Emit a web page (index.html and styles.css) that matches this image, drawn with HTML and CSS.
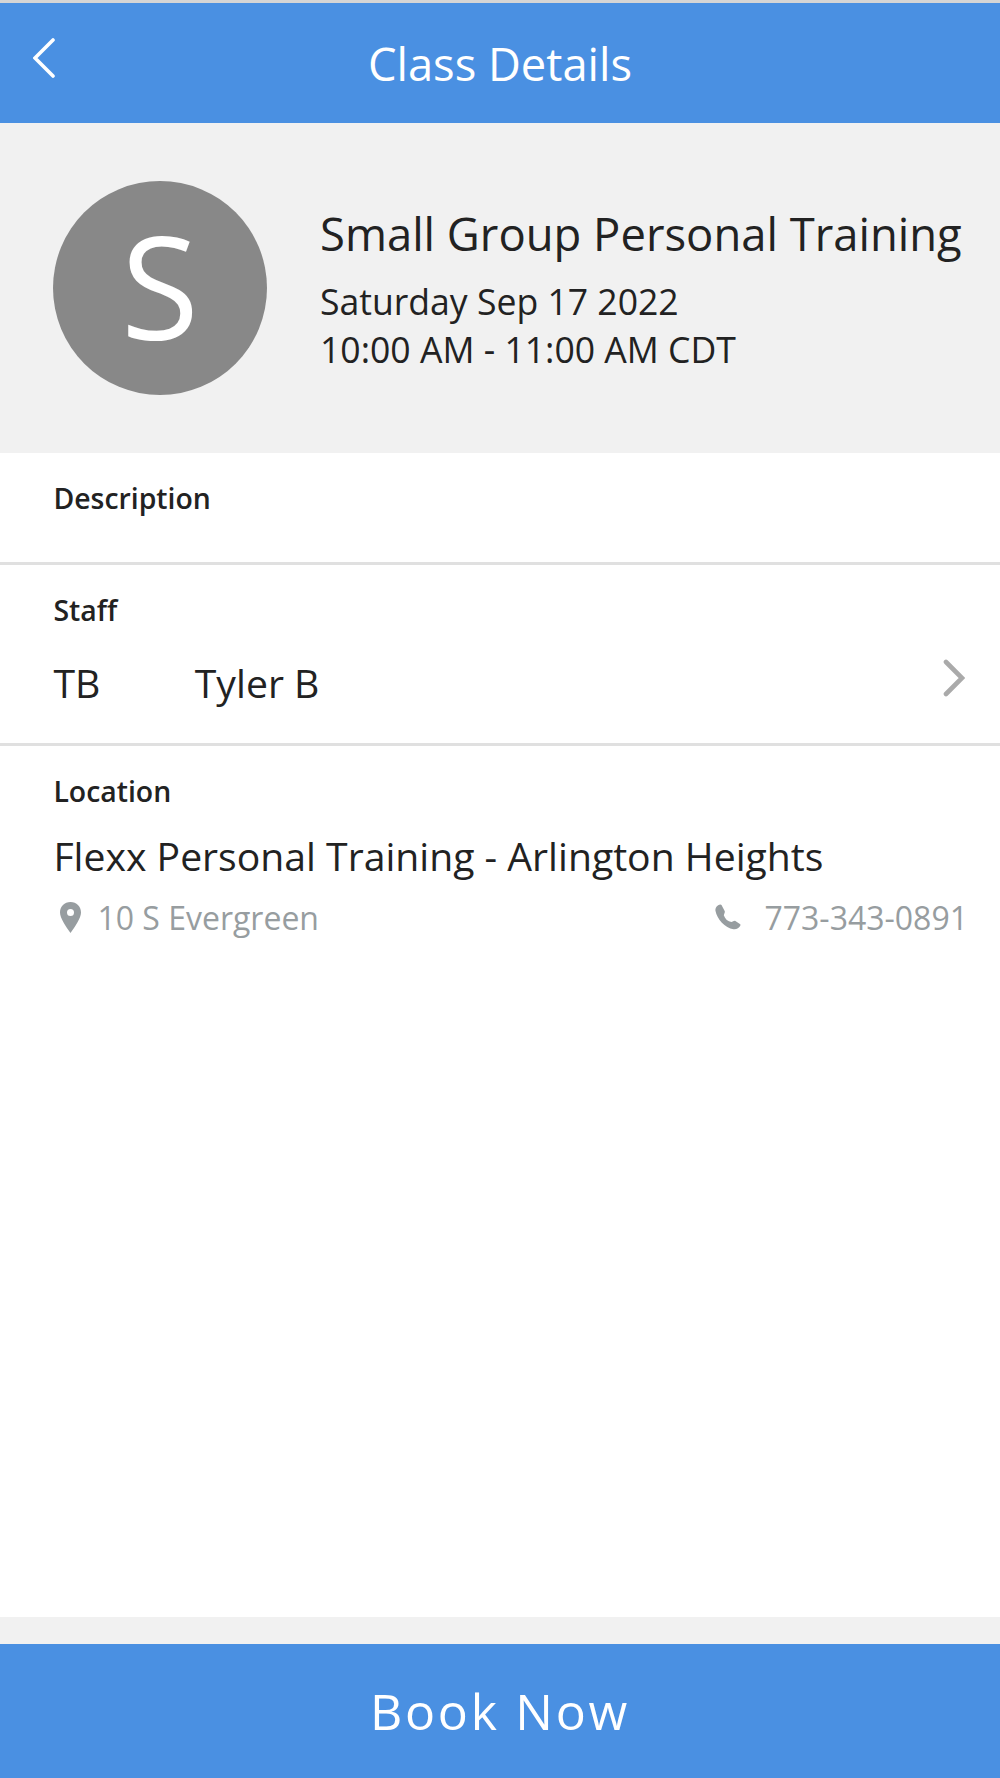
FILE: index.html
```html
<!DOCTYPE html>
<html lang="en">
<head>
  <meta charset="UTF-8"/>
  <meta name="viewport" content="width=device-width, initial-scale=1.0"/>
  <title>Class Details</title>
  <link rel="stylesheet" href="styles.css">
</head>
<body>
  <header class="top-bar">
    <svg class="back-icon" viewBox="0 0 22 40"><path d="M20 2 L2 20 L20 38"/></svg>
    <h1>Class Details</h1>
  </header>

  <section class="summary">
    <div class="avatar">S</div>
    <div class="summary-text">
      <h2>Small Group Personal Training</h2>
      <p>Saturday Sep 17 2022</p>
      <p class="time">10:00 AM - 11:00 AM CDT</p>
    </div>
  </section>

  <main>
    <section class="description">
      <h3>Description</h3>
    </section>

    <section class="staff">
      <h3>Staff</h3>
      <div class="staff-row">
        <span class="initials">TB</span>
        <span class="name">Tyler B</span>
        <svg class="next-icon" viewBox="0 0 22 38"><path d="M3 3 L19 19 L3 35"/></svg>
      </div>
    </section>

    <section class="location">
      <h3>Location</h3>
      <p class="place">Flexx Personal Training - Arlington Heights</p>
      <div class="contact">
        <svg class="pin-icon" viewBox="0 0 21 31"><path fill-rule="evenodd" d="M10.500 0C4.500 0 0 4.500 0 10.500C0 16 6 25 10.500 31C15 25 21 16 21 10.500C21 4.500 16.500 0 10.500 0ZM10.500 7a3.500 3.500 0 1 1 0 7a3.500 3.500 0 0 1 0-7Z"/></svg>
        <span class="address">10 S Evergreen</span>
        <svg class="phone-icon" viewBox="0 0 26 26"><path d="M5.500 0.500C2 1 0 4 0.500 7C2 15 10 24 18.500 25.200C21.500 25.600 24 24 25.500 21.200L25.300 20.200L20 16.800L18.800 16.900L16.500 18C13 17.500 10 15 8.800 11.200L9.800 8.300L9.800 7.300L6.500 0.900Z"/></svg>
        <span class="phone">773-343-0891</span>
      </div>
    </section>
  </main>

  <footer>
    <button type="button" class="book-btn">Book Now</button>
  </footer>
</body>
</html>
```
FILE: styles.css
```css
* { box-sizing:border-box; }
body { margin:0; height:1778px; display:flex; flex-direction:column; background:#fff; color:#222; font-family:'Open Sans', sans-serif; }
h1, h2, h3, p { margin:0; font-weight:400; white-space:nowrap; }
svg { display:block; flex:none; }
.top-bar { height:123px; border-top:3px solid #d5d5d5; background:#4a90e2; color:#fff; display:grid; grid-template-columns:100px 1fr 100px; align-items:center; }
.back-icon { width:22px; height:40px; margin:-10px 0 0 33px; fill:none; stroke:#fff; stroke-width:3.6; stroke-linecap:round; }
.top-bar h1 { font-size:45.3px; line-height:60px; padding-top:2px; text-align:center; }
.summary { height:330px; background:#f1f1f1; display:flex; padding:58px 0 0 53px; }
.avatar { width:214px; height:214px; border-radius:50%; background:#888; color:#fff; font-size:142px; line-height:208px; text-align:center; }
.summary-text { padding:20px 0 0 53px; }
.summary h2 { font-size:45.4px; line-height:64px; }
.summary p { font-size:35.6px; line-height:48px; margin-top:12px; }
.summary .time { margin-top:0; }
main { flex:1; }
h3 { font-size:28.4px; line-height:38px; font-weight:600; }
.description { height:112px; padding:26px 53.4px 0; border-bottom:3px solid #e0e0e0; }
.staff { height:181px; padding:26px 35px 0 53.4px; border-bottom:3px solid #e0e0e0; }
.staff-row { display:flex; align-items:center; margin-top:27px; font-size:39.2px; line-height:54px; }
.initials { width:141.4px; }
.next-icon { width:22px; height:38px; margin:-10px 0 0 auto; fill:none; stroke:#aaa; stroke-width:4.6; stroke-linecap:round; }
.location { padding:26px 32px 0 53.4px; }
.place { font-size:39.15px; line-height:54px; margin-top:19px; }
.contact { display:flex; align-items:center; margin-top:13px; color:#979da0; font-size:32px; line-height:44px; white-space:nowrap; }
.contact svg { fill:#979da0; }
.pin-icon { width:21px; height:31px; margin:-2px 16px 0 7px; }
.phone-icon { width:26px; height:26px; margin:-2px 23px 0 auto; }
footer { border-top:27px solid #f1f1f1; }
.book-btn { display:block; width:100%; height:134px; padding:0; border:none; background:#4a90e2; color:#fff; font:400 50px/134px 'Open Sans', sans-serif; letter-spacing:2.7px; }
```
